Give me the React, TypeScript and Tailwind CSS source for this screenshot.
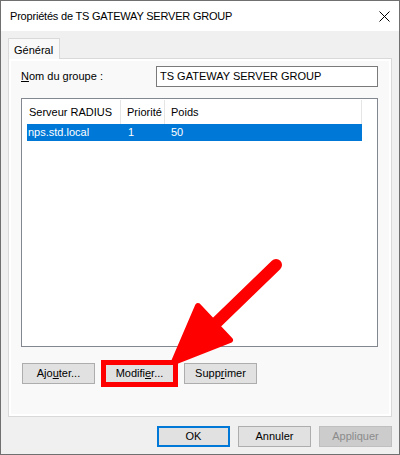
import React from 'react';

const font = { fontFamily: '"Liberation Sans", Arial, sans-serif' };

type Variant = 'normal' | 'default' | 'disabled';

const variantClass: Record<Variant, string> = {
  normal: 'bg-[#e1e1e1] border border-[#adadad] text-black',
  default: 'bg-[#e1e1e1] border-2 border-[#0078d7] text-black',
  disabled: 'bg-[#cccccc] border border-[#bfbfbf] text-[#8b8b8b]',
};

const Btn: React.FC<{ children: React.ReactNode; variant?: Variant }> = ({ children, variant = 'normal' }) => (
  <div className={`w-[73px] h-[21px] flex items-center justify-center text-[11px] ${variantClass[variant]}`}>
    {children}
  </div>
);

export default function App() {
  return (
    <div className="relative w-[400px] h-[455px] border border-[#707070] bg-[#f0f0f0] flex flex-col" style={font}>
      {/* title bar */}
      <div className="h-[30px] shrink-0 bg-white flex items-center justify-between pl-[9px] pr-[9px]">
        <span className="text-[11px] tracking-[-0.2px] text-black">Propriétés de TS GATEWAY SERVER GROUP</span>
        <svg width="11" height="11" viewBox="0 0 11 11">
          <path d="M0.5 0.5L10.5 10.5M10.5 0.5L0.5 10.5" stroke="#000" strokeWidth="1" />
        </svg>
      </div>

      {/* body */}
      <div className="flex-1 flex flex-col px-[7px] pt-[7px]">
        <div className="flex">
          <div className="relative z-10 -mb-px h-[21px] w-[52px] border border-b-0 border-[#d9d9d9] bg-[#f9f9f9] pl-[5px] pt-[3px] text-[11px] text-black">
            Général
          </div>
        </div>

        <div className="h-[359px] border border-[#d9d9d9] bg-[#f9f9f9] shadow-[inset_0_0_0_2px_#ffffff] pl-[12px] pr-[13px] pt-[7px]">
          <div className="flex items-center h-[21px]">
            <span className="w-[135px] text-[11px] text-black">
              <span className="underline">N</span>om du groupe :
            </span>
            <div className="flex-1 h-[21px] border border-[#7a7a7a] bg-white pl-[3px] flex items-center text-[11px] text-black">
              TS GATEWAY SERVER GROUP
            </div>
          </div>

          <div className="mt-[11px] h-[249px] border border-[#828790] bg-white pl-[5px] pt-[1px]">
            <div className="flex h-[24px] items-center text-[11px] text-black">
              <div className="w-[94px] h-full border-r border-[#e5e5e5] pl-[2px] flex items-center">Serveur RADIUS</div>
              <div className="w-[44px] h-full border-r border-[#e5e5e5] pl-[6px] flex items-center">Priorité</div>
              <div className="w-[197px] h-full border-r border-[#e5e5e5] pl-[6px] flex items-center">Poids</div>
            </div>
            <div className="flex h-[17px] w-[335px] items-center bg-[#0078d7] text-[11px] text-white">
              <div className="w-[94px] pl-[1px]">nps.std.local</div>
              <div className="w-[44px] pl-[7px]">1</div>
              <div className="w-[197px] pl-[6px]">50</div>
            </div>
          </div>

          <div className="mt-[16px] flex gap-[8px] pl-[1px]">
            <Btn>
              Ajo<span className="underline">u</span>ter...
            </Btn>
            <div className="relative">
              <Btn>
                Modifi<span className="underline">e</span>r...
              </Btn>
              <div className="absolute -left-[2px] -right-[2px] -top-[3px] -bottom-[3px] border-[5px] border-[#ff0000]" />
            </div>
            <Btn>
              Supp<span className="underline">r</span>imer
            </Btn>
          </div>
        </div>

        <div className="mt-[9px] flex justify-end gap-[8px]">
          <Btn variant="default">OK</Btn>
          <Btn>Annuler</Btn>
          <Btn variant="disabled">Appliquer</Btn>
        </div>
      </div>

      {/* red arrow overlay */}
      <svg
        className="absolute left-[-1px] top-[-1px] pointer-events-none"
        width="400"
        height="455"
        viewBox="0 0 400 455"
      >
        <line x1="276" y1="265" x2="214" y2="325" stroke="#ff0000" strokeWidth="12" strokeLinecap="round" />
        <polygon
          points="174,362 198,306 230,340"
          fill="#ff0000"
          stroke="#ff0000"
          strokeWidth="6"
          strokeLinejoin="round"
        />
      </svg>
    </div>
  );
}
